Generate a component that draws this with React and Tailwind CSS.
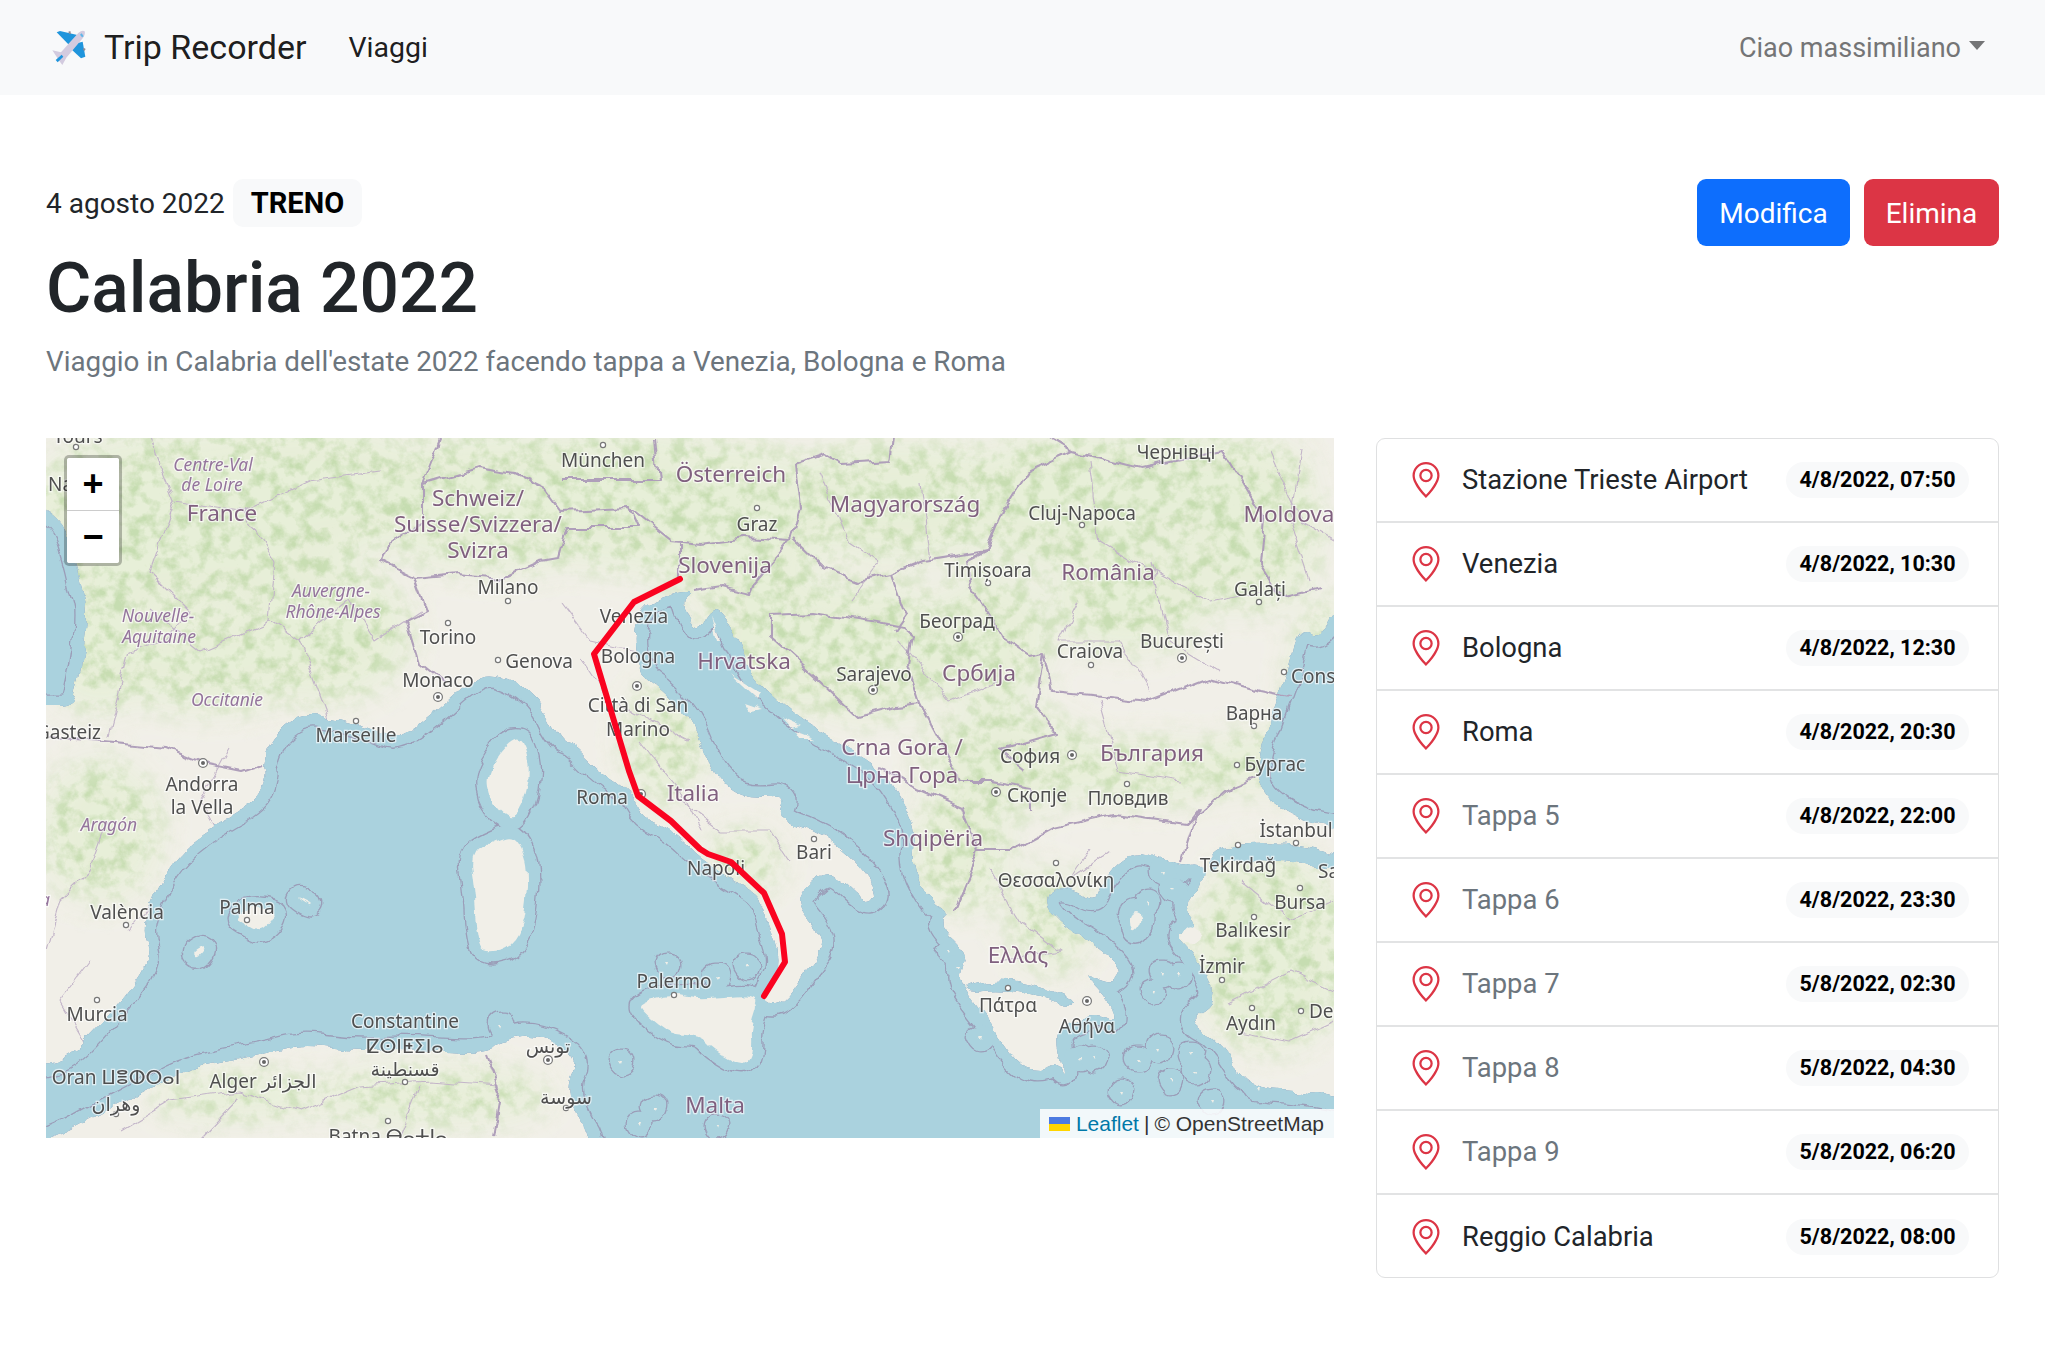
// all map coordinates are screenshot pixels, the svg viewBox is the map's box on the page
const SEA = [
  [20, 1066], [46, 1063], [69, 1056], [95, 1030], [124, 996], [150, 960], [143, 936], [145, 916], [166, 867], [200, 833], [259, 800], [267, 770],
  [263, 763], [272, 737], [301, 712], [335, 717], [368, 727], [398, 740], [440, 707], [461, 687], [490, 668], [537, 693], [560, 740], [573, 743],
  [603, 773], [630, 790], [643, 817], [673, 830], [700, 857], [737, 880], [763, 897], [770, 925], [782, 963], [764, 993], [768, 1003], [783, 1001],
  [800, 977], [824, 947], [820, 930], [800, 907], [800, 893], [820, 873], [837, 873], [866, 903], [880, 892], [850, 853], [813, 830], [777, 817],
  [787, 793], [757, 797], [730, 790], [703, 753], [690, 717], [660, 687], [640, 673], [633, 637], [640, 606], [660, 597], [680, 590], [693, 590],
  [682, 600], [697, 633], [710, 610], [720, 610], [740, 643], [747, 670], [787, 710], [847, 747], [880, 767], [903, 800], [916, 833], [912, 867],
  [932, 903], [949, 913], [937, 923], [970, 953], [957, 977], [974, 1003], [990, 1023], [1020, 1067], [1044, 1070], [1057, 1063], [1065, 1077],
  [1057, 1043], [1061, 1030], [1074, 1020], [1098, 1013], [1115, 1023], [1111, 1000], [1082, 970], [1115, 983], [1123, 967], [1094, 943], [1065, 927],
  [1044, 903], [1053, 887], [1074, 887], [1094, 900], [1098, 887], [1119, 860], [1140, 850], [1181, 867], [1202, 863], [1206, 880], [1181, 903],
  [1202, 927], [1173, 933], [1198, 957], [1219, 997], [1186, 1020], [1219, 1037], [1248, 1087], [1302, 1090], [1334, 1097], [1370, 1100], [1370, 1180],
  [590, 1180], [591, 1137], [579, 1120], [566, 1087], [581, 1057], [537, 1033], [503, 1037], [486, 1053], [402, 1047], [356, 1050], [301, 1043],
  [263, 1053], [187, 1067], [145, 1090], [95, 1116], [65, 1133], [20, 1150],
];
const ATLANTIC = [[20, 500], [46, 508], [65, 527], [76, 563], [82, 590], [88, 610], [84, 647], [78, 683], [72, 705], [46, 705], [20, 705]];
const BLACK_SEA = [[1370, 600], [1334, 610], [1322, 636], [1298, 626], [1289, 670], [1264, 736], [1256, 770], [1260, 787], [1273, 803], [1302, 820], [1334, 827], [1370, 830]];
const MARMARA = [[1235, 843], [1298, 842], [1334, 853], [1370, 860], [1370, 868], [1334, 867], [1281, 860], [1219, 860], [1206, 872], [1212, 850]];
const CORINTH = [[962, 985], [1000, 978], [1040, 985], [1075, 1000], [1070, 1006], [1040, 995], [1000, 988], [970, 992]];

const ISLANDS = [
  [[516, 737], [500, 750], [486, 775], [490, 800], [512, 823], [525, 800], [530, 770], [525, 745]],
  [[516, 833], [496, 838], [469, 853], [474, 883], [478, 940], [486, 953], [520, 943], [530, 870]],
  [[236, 917], [250, 906], [280, 910], [263, 933], [246, 923]],
  [[295, 895], [314, 905], [305, 903]],
  [[192, 952], [206, 945], [198, 957]],
  [[640, 1003], [672, 993], [700, 1000], [762, 992], [750, 1027], [752, 1050], [744, 1065], [712, 1047], [700, 1033], [671, 1033], [642, 1010]],
  [[1190, 920], [1204, 930], [1196, 946], [1180, 940]],
  [[1130, 908], [1146, 916], [1132, 936]],
];
// tiny islands: just a speck with a ring of sea limit round it
const SPECKS = [
  [1161, 870], [1171, 887], [1146, 900], [1138, 921], [1181, 937], [1177, 973], [1161, 970], [1150, 990], [1078, 1055], [1092, 1057],
  [978, 1036], [1136, 1056], [1157, 1046], [1190, 1053], [1169, 1080], [1194, 1070], [1210, 1100], [1256, 1086], [1240, 1060], [1120, 1090],
  [620, 1060], [652, 1105], [638, 1122], [667, 963], [499, 1023], [715, 975], [745, 965], [715, 1125], [948, 950], [958, 965],
];
const CROATIAN_ISLES = [
  'M712 615 L718 640 L722 640 Z', 'M728 672 L760 692 L756 698 Z', 'M780 715 L800 724 L790 726 Z', 'M795 730 L815 738 L800 738 Z', 'M745 702 L762 708 L750 710 Z',
];

const BORDERS = [
  'M46 736 L103 740 L166 746 L208 763 L242 770 L263 763',
  'M423 483 L478 467 L516 473 L545 487 L562 510 L629 507 L638 527 L566 527 L558 557 L541 560 L503 577 L457 573 L415 577 L381 560 L389 543 L423 520 Z',
  'M415 577 L427 610 L406 620 L419 663 L444 683',
  'M562 480 L659 480 L655 440',
  'M423 483 L444 430',
  'M629 507 L671 540 L700 543 L746 537 L791 540',
  'M680 543 L680 580',
  'M693 590 L721 586 L750 593 L754 583 L791 540',
  'M795 463 L800 507 L791 540',
  'M795 463 L825 453 L841 463 L891 460 L895 430',
  'M1040 430 L1073 450 L1028 470 L1003 510 L986 550 L924 560 L891 573 L858 580 L825 567 L795 538',
  'M891 573 L903 606 L907 613 L895 630',
  'M771 613 L812 611 L878 621 L903 626',
  'M771 613 L771 636 L816 676 L858 716 L895 706 L920 703 L907 663 L912 633 L903 626',
  'M986 550 L966 560 L970 586 L982 603 L1003 636 L1028 653 L1044 650 L1053 690 L1148 700 L1210 676 L1260 690 L1289 696',
  'M1073 450 L1140 467 L1223 450 L1264 517 L1260 563 L1281 596 L1322 586',
  'M1044 650 L1036 706 L1057 733 L999 750 L1024 770',
  'M880 767 L916 787 L961 807 L978 850 L953 910',
  'M978 850 L1011 850 L1053 827 L1115 813 L1186 823 L1198 807 L1181 863',
  'M1186 823 L1223 790 L1256 777',
  'M961 780 L991 780 L1032 787 L1032 810',
  'M920 703 L961 780',
  'M486 1053 L500 1090 L492 1137',
];

const REGIONS = [
  'M150 437 L175 500 L150 570 L190 610 L165 640 L130 650 L108 735',
  'M175 500 L245 510 L275 560 L270 620 L300 640 L330 720',
  'M245 510 L310 480 L380 470',
  'M270 620 L200 650 L150 610',
  'M300 640 L350 600 L375 640 L420 610',
  'M230 745 L200 800 L220 835 L170 880 L130 930',
  'M108 820 L90 870 L60 900 L46 950',
  'M90 960 L60 1000 L90 1050',
  'M560 600 L590 640 L635 650',
  'M580 655 L610 700 L650 720 L690 740',
  'M640 740 L680 790 L700 830',
  'M680 800 L720 830 L770 830 L790 860',
  'M1090 460 L1100 540 L1150 570 L1210 600 L1260 590',
  'M1080 600 L1060 640 L1120 640 L1150 690',
  'M1150 560 L1170 640 L1220 670',
  'M920 480 L930 560',
  'M1270 450 L1300 520 L1334 540',
  'M1300 450 L1290 520 L1310 580',
  'M900 640 L950 700 L1000 680',
  'M1090 850 L1070 880 L1110 850',
  'M990 870 L1020 920 L1060 950 L1000 960',
  'M1240 880 L1290 920 L1334 900',
  'M1230 1000 L1290 970 L1334 990',
  'M1240 1030 L1290 1040 L1334 1020',
  'M120 1130 L170 1100 L240 1090 L300 1110 L360 1085 L430 1080 L500 1085',
  'M200 1137 L240 1095',
  'M400 1137 L420 1085',
  'M850 600 L880 560',
  'M1100 700 L1120 770 L1180 780',
  'M820 470 L850 540 L880 560',
];

const GREEN = [
  [170, 520, 150, 90], [290, 490, 160, 70], [100, 640, 60, 70], [320, 630, 90, 70], [210, 660, 100, 50],
  [500, 500, 140, 70], [640, 500, 130, 70], [730, 520, 100, 80], [600, 460, 130, 30],
  [780, 640, 80, 70], [870, 650, 90, 70], [990, 640, 60, 70], [900, 500, 130, 60], [1080, 500, 130, 70],
  [1130, 600, 80, 50], [1250, 530, 70, 80], [1010, 760, 90, 50], [1150, 770, 100, 30],
  [960, 850, 50, 60], [1050, 920, 40, 50], [1270, 760, 60, 30], [1270, 950, 80, 100],
  [665, 740, 40, 60], [745, 860, 35, 30], [100, 830, 60, 70], [430, 1095, 120, 28],
  [240, 1095, 90, 22], [480, 900, 18, 40], [1180, 470, 130, 40], [1330, 700, 40, 100],
];

const CITIES = [
  ['München', 603, 459], ['Milano', 508, 586], ['Torino', 448, 636], ['Genova', 539, 660], ['Monaco', 438, 679],
  ['Venezia', 634, 615], ['Bologna', 638, 655], ['Città di San', 638, 704], ['Marino', 638, 728], ['Marseille', 356, 734],
  ['Graz', 757, 523], ['Cluj-Napoca', 1082, 512], ['Чернівці', 1176, 451], ['Timișoara', 988, 569], ['Galați', 1260, 588],
  ['Београд', 957, 620], ['Sarajevo', 874, 673], ['Craiova', 1090, 650], ['București', 1182, 640], ['Варна', 1254, 712],
  ['София', 1030, 755], ['Бургас', 1275, 763], ['Roma', 602, 796], ['Скопје', 1037, 794], ['Пловдив', 1128, 797],
  ['İstanbul', 1296, 829], ['Bari', 814, 851], ['Tekirdağ', 1238, 864], ['Θεσσαλονίκη', 1056, 879], ['Napoli', 716, 867],
  ['Bursa', 1300, 901], ['Balıkesir', 1253, 929], ['İzmir', 1222, 965], ['Πάτρα', 1008, 1004], ['Αθήνα', 1087, 1025],
  ['Aydın', 1251, 1022], ['Palermo', 674, 980], ['Andorra', 202, 783], ['la Vella', 202, 806], ['València', 127, 911],
  ['Palma', 247, 906], ['Murcia', 97, 1013], ['Constantine', 405, 1020], ['ⵇⵙⵏⵟⵉⵏⴰ', 405, 1045], ['قسنطينة', 405, 1068],
  ['تونس', 548, 1045], ['سوسة', 566, 1096], ['Oran ⵡⴻⵀⵔⴰⵏ', 116, 1076], ['وهران', 116, 1103], ['Alger الجزائر', 263, 1080],
  ['Batna ⴱⴰⵜⵏⴰ', 388, 1135], ['Tours', 78, 435],
];
const CLIPPED_CITIES = [
  ['Nantes', 48, 483], ['Constanța', 1291, 675], ['Sakarya', 1318, 870], ['Denizli', 1309, 1010],
];

const COUNTRIES = [
  ['France', 222, 511], ['Schweiz/', 478, 496], ['Suisse/Svizzera/', 478, 522], ['Svizra', 478, 548],
  ['Österreich', 731, 472], ['Slovenija', 725, 563], ['Magyarország', 905, 502], ['Moldova', 1289, 512],
  ['România', 1108, 570], ['Hrvatska', 744, 659], ['Србија', 979, 671], ['Crna Gora /', 902, 745],
  ['Црна Гора', 902, 773], ['България', 1152, 751], ['Italia', 693, 791], ['Shqipëria', 933, 836],
  ['Ελλάς', 1018, 953], ['Malta', 715, 1103],
];

const AREAS = [
  ['Centre-Val', 213, 463], ['de Loire', 212, 483], ['Auvergne-', 331, 589], ['Rhône-Alpes', 333, 610],
  ['Nouvelle-', 158, 614], ['Aquitaine', 159, 635], ['Occitanie', 227, 698], ['Aragón', 109, 823],
];

const DOTS = [
  [76, 446], [603, 444], [508, 600], [448, 622], [498, 659], [356, 720], [757, 507], [1082, 524], [988, 582], [1259, 601],
  [1091, 664], [1284, 671], [1254, 725], [1237, 764], [1127, 783], [1238, 844], [1296, 842], [814, 838], [1056, 862],
  [1300, 887], [1254, 916], [1222, 979], [1008, 987], [1252, 1007], [1301, 1010], [674, 994], [126, 924], [247, 919],
  [97, 999], [405, 1081], [566, 1107], [116, 1113], [388, 1120],
];
const CAPITALS = [
  [438, 696], [637, 685], [203, 762], [958, 636], [873, 689], [1182, 657], [1072, 754], [996, 791], [641, 793], [1087, 1000], [264, 1061], [548, 1059],
];

const ROUTE = '680,578 634,601 594,653 629,770 638,795 671,820 700,848 708,853 731,861 764,892 782,933 785,961 764,995';

const STOPS = [
  { name: 'Stazione Trieste Airport', date: '4/8/2022, 07:50' },
  { name: 'Venezia', date: '4/8/2022, 10:30' },
  { name: 'Bologna', date: '4/8/2022, 12:30' },
  { name: 'Roma', date: '4/8/2022, 20:30' },
  { name: 'Tappa 5', date: '4/8/2022, 22:00', muted: true },
  { name: 'Tappa 6', date: '4/8/2022, 23:30', muted: true },
  { name: 'Tappa 7', date: '5/8/2022, 02:30', muted: true },
  { name: 'Tappa 8', date: '5/8/2022, 04:30', muted: true },
  { name: 'Tappa 9', date: '5/8/2022, 06:20', muted: true },
  { name: 'Reggio Calabria', date: '5/8/2022, 08:00' },
];

// closed curve through the midpoints of the outline
function smooth(points) {
  const mid = (a, b) => [(a[0] + b[0]) / 2, (a[1] + b[1]) / 2];
  const start = mid(points[points.length - 1], points[0]);
  let d = `M${start[0]} ${start[1]}`;
  points.forEach((p, i) => {
    const m = mid(p, points[(i + 1) % points.length]);
    d += ` Q${p[0]} ${p[1]} ${m[0]} ${m[1]}`;
  });
  return d + ' Z';
}

function PlaneIcon() {
  return (
    <svg viewBox="0 0 150 135" className="w-[50px] h-[45px] shrink-0">
      <path d="M35 22 L45 18 L97 30 L70 58 Z" fill="#1f95dc" />
      <path d="M95 55 L113 50 L121 95 L108 100 L78 72 Z" fill="#1f95dc" />
      <path d="M70 20 L76 18 L78 27 L72 26 Z" fill="#8d8a96" />
      <path d="M116 68 L122 72 L118 78 L114 74 Z" fill="#8d8a96" />
      <path d="M22 76 L48 82 L100 24 Q112 14 119 19 Q122 28 113 40 L64 98 L52 120 L43 108 Z" fill="#d3cbdf" />
      <path d="M32 105 L50 89 L55 95 L38 112 Z" fill="#1f95dc" />
      <path d="M105 29 L110 25 L116 34 L111 37 Z" fill="#5fb6e8" />
    </svg>
  );
}

function PinIcon() {
  return (
    <svg viewBox="0 0 16 16" fill="#dc3545" className="w-[36px] h-[36px] shrink-0">
      <path d="M12.166 8.94c-.524 1.062-1.234 2.12-1.96 3.07A31.493 31.493 0 0 1 8 14.58a31.481 31.481 0 0 1-2.206-2.57c-.726-.95-1.436-2.008-1.96-3.07C3.304 7.867 3 6.862 3 6a5 5 0 0 1 10 0c0 .862-.305 1.867-.834 2.94zM8 16s6-5.686 6-10A6 6 0 0 0 2 6c0 4.314 6 10 6 10z" />
      <path d="M8 8a2 2 0 1 1 0-4 2 2 0 0 1 0 4zm0 1a3 3 0 1 0 0-6 3 3 0 0 0 0 6z" />
    </svg>
  );
}

function MapArt() {
  const water = [SEA, ATLANTIC, BLACK_SEA, MARMARA, CORINTH].map(smooth).join(' ');
  const islands = ISLANDS.map(smooth);
  const specks = SPECKS.map(([x, y]) => `M${x} ${y} l3 0 l-1 3 z`);
  const bits = [...islands, ...specks];
  return (
    <svg viewBox="46 437 1288 700" className="block w-[1288px] h-[700px]">
      <defs>
        <filter id="mottle" x="0" y="0" width="100%" height="100%" colorInterpolationFilters="sRGB">
          <feTurbulence type="fractalNoise" baseFrequency="0.07" numOctaves="4" seed="7" />
          <feColorMatrix values="0 0 0 0 0.75  0 0 0 0 0.85  0 0 0 0 0.66  3 0 0 0 -1.25" />
        </filter>
        <filter id="soft" x="-30%" y="-30%" width="160%" height="160%">
          <feGaussianBlur stdDeviation="16" />
        </filter>
        <filter id="rough" x="0" y="0" width="100%" height="100%" colorInterpolationFilters="sRGB">
          <feTurbulence type="fractalNoise" baseFrequency="0.045" numOctaves="3" seed="4" result="n" />
          <feDisplacementMap in="SourceGraphic" in2="n" scale="11" xChannelSelector="R" yChannelSelector="G" />
        </filter>
        <mask id="greenAreas">
          <g fill="#fff" filter="url(#soft)">
            {GREEN.map(([cx, cy, rx, ry], i) => <ellipse key={i} cx={cx} cy={cy} rx={rx} ry={ry} />)}
          </g>
        </mask>
        <clipPath id="inSea"><path d={water} /></clipPath>
      </defs>

      <g className="blur-[0.6px]">
        <rect x="46" y="437" width="1288" height="700" fill="#f1efe8" />
        <g filter="url(#soft)" opacity="0.95">
          {GREEN.map(([cx, cy, rx, ry], i) => <ellipse key={i} cx={cx} cy={cy} rx={rx} ry={ry} fill="#e7efd8" />)}
        </g>
        <g mask="url(#greenAreas)" opacity="0.8">
          <rect x="46" y="437" width="1288" height="700" filter="url(#mottle)" />
        </g>

        <g filter="url(#rough)">
          <g stroke="#c3b5c9" fill="none" strokeWidth="1.1" strokeLinejoin="round">
            {REGIONS.map((d, i) => <path key={i} d={d} />)}
          </g>

          <path d={water} fill="#aad2de" />

          {/* sea limits: a wide stroke of the coast, only kept on the water side */}
          <g clipPath="url(#inSea)" fill="none" strokeLinejoin="round" strokeLinecap="round">
            <path d={water} stroke="#9b9db8" strokeWidth="27" />
            {bits.map((d, i) => <path key={i} d={d} stroke="#9b9db8" strokeWidth="25" />)}
            <path d={water} stroke="#aad2de" strokeWidth="24.4" />
            {bits.map((d, i) => <path key={i} d={d} stroke="#aad2de" strokeWidth="22.4" />)}
          </g>
          <g fill="#f1efe8">
            {bits.map((d, i) => <path key={i} d={d} />)}
            {CROATIAN_ISLES.map((d, i) => <path key={i} d={d} />)}
          </g>

          <g stroke="#af9fba" fill="none" strokeWidth="2.1" strokeLinejoin="round">
            {BORDERS.map((d, i) => <path key={i} d={d} />)}
          </g>
        </g>

        <g fill="#fff" stroke="#777" strokeWidth="1.2">
          {DOTS.map(([x, y], i) => <circle key={i} cx={x} cy={y} r="2.6" />)}
          {CAPITALS.map(([x, y], i) => <circle key={i} cx={x} cy={y} r="4.4" />)}
        </g>
        <g fill="#666">
          {CAPITALS.map(([x, y], i) => <circle key={i} cx={x} cy={y} r="2" />)}
        </g>

        <g fontFamily="'Noto Sans', 'DejaVu Sans', sans-serif" textAnchor="middle" dominantBaseline="central" stroke="#ffffff" strokeOpacity="0.65" strokeWidth="2.5" className="[paint-order:stroke]">
          <g fontSize="19" fill="#4f4f4f">
            {CITIES.map(([t, x, y]) => <text key={t} x={x} y={y}>{t}</text>)}
            {CLIPPED_CITIES.map(([t, x, y]) => <text key={t} x={x} y={y} textAnchor="start">{t}</text>)}
            <text x="101" y="731" textAnchor="end">Vitoria-Gasteiz</text>
          </g>
          <g fontSize="22.5" fill="#80607f">
            {COUNTRIES.map(([t, x, y]) => <text key={t} x={x} y={y}>{t}</text>)}
          </g>
          <g fontSize="17.5" fontStyle="italic" fill="#94749c">
            {AREAS.map(([t, x, y]) => <text key={t} x={x} y={y}>{t}</text>)}
            <text x="50" y="898" textAnchor="end">Castilla</text>
          </g>
        </g>
      </g>

      <polyline points={ROUTE} fill="none" stroke="#fa0320" strokeWidth="6" strokeLinecap="round" strokeLinejoin="round" />
    </svg>
  );
}

export default function App() {
  return (
    <div className="min-h-screen bg-white text-[#212529] font-['Roboto',sans-serif]">
      <nav className="h-[95px] bg-[#f8f9fa] flex items-center pl-[45px] pr-[60px]">
        <PlaneIcon />
        <a className="ml-[9px] text-[34px] text-black/90">Trip Recorder</a>
        <a className="ml-[42px] pt-[1px] text-[28.5px] text-black/90">Viaggi</a>
        <div className="ml-auto pt-[1px] flex items-center text-[27px] text-[#747576]">
          Ciao massimiliano
          <span className="ml-[8px] w-0 h-0 border-x-[8.5px] border-x-transparent border-t-[9px] border-t-[#747576] -mt-[6px]"></span>
        </div>
      </nav>

      <main className="px-[46px]">
        <div className="flex justify-between items-start pt-[84px]">
          <div>
            <div className="flex items-center">
              <span className="pt-[2px] text-[28px]">4 agosto 2022</span>
              <span className="ml-[8px] h-[48px] pt-[2px] px-[18px] flex items-center rounded-[10px] bg-[#f8f9fa] text-[29px] font-bold text-black">TRENO</span>
            </div>
            <h1 className="mt-[19px] text-[69.5px] leading-[85px] font-medium">Calabria 2022</h1>
            <p className="mt-[11px] text-[27.8px] leading-[40px] text-[#6c757d]">Viaggio in Calabria dell'estate 2022 facendo tappa a Venezia, Bologna e Roma</p>
          </div>
          <div className="flex gap-[14px]">
            <button className="h-[67px] w-[153px] pt-[2px] rounded-[9px] bg-[#0d6efd] text-white text-[28px]">Modifica</button>
            <button className="h-[67px] w-[135px] pt-[2px] rounded-[9px] bg-[#dc3545] text-white text-[28px]">Elimina</button>
          </div>
        </div>

        <div className="mt-[56px] flex items-start justify-between">
          <div className="relative w-[1288px] h-[700px] overflow-hidden">
            <MapArt />
            <div className="absolute left-[18px] top-[17px] w-[58px] h-[111px] rounded-[5px] border-[3px] border-black/25 bg-clip-padding bg-white flex flex-col font-['Liberation_Sans',sans-serif] font-bold text-[36px] text-black">
              <span className="flex-1 flex items-center justify-center border-b border-[#ccc] rounded-t-[3px] bg-white leading-none">+</span>
              <span className="flex-1 flex items-center justify-center rounded-b-[3px] bg-white leading-none">−</span>
            </div>
            <div className="absolute right-0 bottom-0 h-[29px] pl-[9px] pr-[10px] flex items-center bg-white/85 font-['Liberation_Sans',sans-serif] text-[21px] text-[#333]">
              <svg viewBox="0 0 12 8" className="w-[21px] h-[14px] mr-[6px]">
                <rect width="12" height="4" fill="#4c7be1" />
                <rect y="4" width="12" height="4" fill="#ffd500" />
              </svg>
              <span className="text-[#0078a8]">Leaflet</span>
              <span className="mx-[5px]">|</span>
              <span>© OpenStreetMap</span>
            </div>
          </div>

          <ul className="w-[623px] h-[840px] rounded-[9px] border border-[#dfe0e1] divide-y-2 divide-[#e2e3e4] overflow-hidden">
            {STOPS.map(stop => (
              <li key={stop.date} className="h-[84px] flex items-center pl-[31px] pr-[29px]">
                <PinIcon />
                <span className={`ml-[18px] pt-[2px] text-[27.4px] ${stop.muted ? 'text-[#6c757d]' : 'text-[#212529]'}`}>{stop.name}</span>
                <span className="ml-auto w-[183px] h-[36px] flex items-center justify-center rounded-full bg-[#f8f9fa] text-[21.5px] font-bold text-black">{stop.date}</span>
              </li>
            ))}
          </ul>
        </div>
      </main>
    </div>
  );
}
